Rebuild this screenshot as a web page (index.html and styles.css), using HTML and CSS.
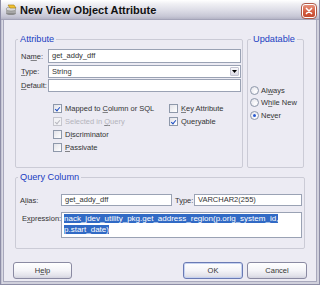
FILE: index.html
```html
<!DOCTYPE html>
<html>
<head>
<meta charset="utf-8">
<title>New View Object Attribute</title>
<link rel="stylesheet" href="styles.css">
</head>
<body>
<div class="window">
  <div class="titlebar">
    <svg class="appicon" width="13" height="12" viewBox="0 0 13 12">
      <ellipse cx="6" cy="9" rx="5" ry="2" fill="#8c8c8c"/>
      <rect x="1" y="5" width="10" height="4" fill="#a8a8a8"/>
      <ellipse cx="6" cy="5" rx="5" ry="2" fill="#d8d8d8" stroke="#888" stroke-width="0.6"/>
      <path d="M3 1 L9 1 L11 4 L5 4 Z" fill="#f2c230" stroke="#a07810" stroke-width="0.6"/>
    </svg>
    <span class="title">New View Object Attribute</span>
    <span class="close">
      <svg width="14" height="14" viewBox="0 0 14 14">
        <path d="M4 4 L10 10 M10 4 L4 10" stroke="#fff" stroke-width="1.8" stroke-linecap="round"/>
      </svg>
    </span>
  </div>
  <div class="content">
    <div class="toprow">
      <fieldset class="group attr">
        <legend>Attribute</legend>
        <div class="fields">
          <label class="lbl">Na<u>m</u>e:</label>
          <div class="input">get_addy_dff</div>
          <label class="lbl"><u>T</u>ype:</label>
          <div class="input select">String<span class="arrow"><svg width="5" height="3" viewBox="0 0 5 3"><path d="M0 0 H5 L2.5 3 Z" fill="#000"/></svg></span></div>
          <label class="lbl"><u>D</u>efault:</label>
          <div class="input"></div>
        </div>
        <div class="checks">
          <div class="chk checked"><span class="box"></span><span>Mapped to <u>C</u>olumn or SQL</span></div>
          <div class="chk"><span class="box"></span><span><u>K</u>ey Attribute</span></div>
          <div class="chk checked disabled"><span class="box"></span><span>Selected in <u>Q</u>uery</span></div>
          <div class="chk checked"><span class="box"></span><span>Que<u>r</u>yable</span></div>
          <div class="chk"><span class="box"></span><span>D<u>i</u>scriminator</span></div>
          <div></div>
          <div class="chk"><span class="box"></span><span><u>P</u>assivate</span></div>
        </div>
      </fieldset>
      <fieldset class="group upd">
        <legend>Updatable</legend>
        <div class="radios">
          <div class="rad"><span class="circle"></span><span>Al<u>w</u>ays</span></div>
          <div class="rad"><span class="circle"></span><span>W<u>h</u>ile New</span></div>
          <div class="rad on"><span class="circle"></span><span>Ne<u>v</u>er</span></div>
        </div>
      </fieldset>
    </div>
    <fieldset class="group query">
      <legend>Query Column</legend>
      <div class="qgrid">
        <label class="lbl alias">A<u>l</u>ias:</label>
        <div class="input">get_addy_dff</div>
        <label class="lbl qtype">T<u>y</u>pe:</label>
        <div class="input">VARCHAR2(255)</div>
        <label class="lbl expr">E<u>x</u>pression:</label>
        <div class="input area"><span class="sel">nack_jdev_utility_pkg.get_address_region(p.orig_system_id,</span><br><span class="sel">p.start_date)</span></div>
      </div>
    </fieldset>
    <div class="buttons">
      <button class="btn help">H<u>e</u>lp</button>
      <span class="spacer"></span>
      <button class="btn ok">OK</button>
      <button class="btn cancel">Cancel</button>
    </div>
  </div>
</div>
</body>
</html>
```

FILE: styles.css
```css
* { box-sizing: border-box; }
html, body { margin: 0; padding: 0; }
body {
  width: 320px;
  height: 285px;
  overflow: hidden;
  background: #ffffff;
  font-family: "Liberation Sans", Arial, sans-serif;
  font-size: 7.5px;
  color: #333;
}
u { text-decoration: underline; text-decoration-color: rgba(0,0,0,0.45); text-underline-offset: 1px; }

.window {
  width: 320px;
  height: 285px;
  display: flex;
  flex-direction: column;
  background: linear-gradient(90deg, #b0b0c4 0, #dcdce6 1px, #d0d0dc 3px);
  border: 1px solid #8d8da6;
  border-top: none;
  padding: 0 2px 2px 2px;
}

.titlebar {
  height: 20px;
  margin: 0 -2px;
  flex: none;
  display: flex;
  align-items: center;
  padding: 0 3px 0 4px;
  background: linear-gradient(#ffffff 0%, #f0f0f4 20%, #dcdce6 55%, #c8c8d6 85%, #b4b4c6 100%);
  border-bottom: 1px solid #a4a4b8;
}
.appicon { flex: none; margin-right: 2px; }
.title {
  font-weight: bold;
  font-size: 11px;
  color: #111;
  flex: 1;
  padding-top: 1px;
}
.close {
  width: 14px;
  height: 14px;
  border-radius: 3px;
  border: 1px solid #ffffff;
  outline: 1px solid #b05a4a;
  background: linear-gradient(#e6917c, #d25a3e 60%, #c44a30);
  display: flex;
  align-items: center;
  justify-content: center;
  margin-top: 2px;
}
.close svg { display: block; }

.content {
  flex: 1;
  background: #ecebf3;
  border: 1px solid #a8a8bc;
  border-top: none;
  padding: 14px 11px 0 11px;
  display: flex;
  flex-direction: column;
}

.toprow {
  display: flex;
  gap: 4px;
  height: 134px;
}

.group {
  margin: 0;
  border: 1px solid #cbcbd6;
  border-radius: 2px;
  padding: 5px 1px 0 1px;
  min-width: 0;
}
.group legend {
  font-size: 9.2px;
  line-height: 10px;
  height: 10px;
  color: #1a3dc2;
  padding: 0 2px;
  margin-left: 1px;
}

.attr { width: 228px; flex: none; }
.upd { width: 57px; flex: none; padding: 0 1px 0 2px; display: flex; flex-direction: column; }

.fields {
  display: grid;
  grid-template-columns: 27px 1fr;
  row-gap: 1.5px;
  padding-left: 4px;
  align-items: center;
}
.lbl { white-space: nowrap; }

.input {
  height: 14px;
  background: #fff;
  border: 1px solid #9aa2b4;
  padding: 0 3px;
  line-height: 12px;
  white-space: nowrap;
  overflow: hidden;
  color: #333;
}
.select {
  display: flex;
  align-items: center;
  justify-content: space-between;
  padding-right: 1px;
  height: 13px;
  line-height: 11px;
}
.fields .input:nth-of-type(3) { height: 13px; }
.arrow {
  width: 9px;
  height: 9px;
  display: flex;
  align-items: center;
  justify-content: center;
  background: linear-gradient(#f8f8fb, #dcdce6);
  border: 1px solid #c4c4d2;
  border-radius: 1px;
}

.checks {
  display: grid;
  grid-template-columns: 116px 1fr;
  grid-auto-rows: 13px;
  padding-left: 36px;
  margin-top: 12px;
}
.chk {
  display: flex;
  align-items: center;
  gap: 3px;
  white-space: nowrap;
  height: 9px;
  color: #333;
}
.box {
  width: 9px;
  height: 9px;
  flex: none;
  border: 1px solid #8e98aa;
  background: linear-gradient(135deg, #e2e2e8, #ffffff);
  position: relative;
}
.chk.checked .box::after {
  content: "";
  position: absolute;
  left: 1.5px;
  top: 0.5px;
  width: 2px;
  height: 4px;
  border: solid #1f4fc4;
  border-width: 0 1.5px 1.5px 0;
  transform: rotate(40deg);
}
.chk.disabled { color: #b4b4bc; }
.chk.disabled .box { border-color: #c6c6ce; background: #f2f2f5; }
.chk.disabled .box::after { border-color: #b8b8c0; }

.radios {
  flex: 1;
  display: flex;
  flex-direction: column;
  justify-content: center;
  gap: 3.5px;
  padding-top: 6px;
  padding-bottom: 12px;
}
.rad {
  display: flex;
  align-items: center;
  gap: 2px;
  height: 9px;
  white-space: nowrap;
  color: #333;
}
.circle {
  width: 9px;
  height: 9px;
  flex: none;
  border-radius: 50%;
  border: 1px solid #8e98aa;
  background: radial-gradient(circle at 65% 65%, #ffffff, #e0e0e8);
  display: flex;
  align-items: center;
  justify-content: center;
}
.rad.on .circle::after {
  content: "";
  width: 3px;
  height: 3px;
  border-radius: 50%;
  background: #2a5ad0;
}

.query {
  margin-top: 4px;
  height: 77px;
  padding: 12px 2px 0 1px;
}
.qgrid {
  display: grid;
  grid-template-columns: 44px 111px 22px 1fr;
  grid-template-rows: 12px 26px;
  row-gap: 6px;
  align-items: center;
}
.qgrid .input { height: 12px; line-height: 10px; }
.alias { padding-left: 3px; }
.qtype { padding-left: 3px; }
.expr { padding-left: 5px; align-self: start; padding-top: 2px; }
.area {
  grid-column: 2 / 5;
  height: 26px !important;
  font-size: 8px;
  line-height: 10.5px !important;
  padding: 1px 1px 0 2px;
  color: #fff;
}
.sel { background: #316ac5; }

.buttons {
  display: flex;
  align-items: center;
  padding: 13px 0 0 0;
  margin: 0 -2px 0 -2px;
  gap: 4px;
}
.spacer { flex: 1; }
.btn {
  font-family: "Liberation Sans", Arial, sans-serif;
  font-size: 7.5px;
  color: #333;
  width: 59px;
  height: 17px;
  padding: 0;
  border: 1px solid #8a8aa2;
  border-radius: 3px;
  background: linear-gradient(#ffffff 0%, #f4f4f8 50%, #e2e2ea 85%, #d2d2de 100%);
}
.btn.ok {
  width: 60px;
  border-color: #6a7ab4;
  box-shadow: inset 0 0 0 1px #c6d2f0;
}
.btn.cancel { width: 60px; }
```
